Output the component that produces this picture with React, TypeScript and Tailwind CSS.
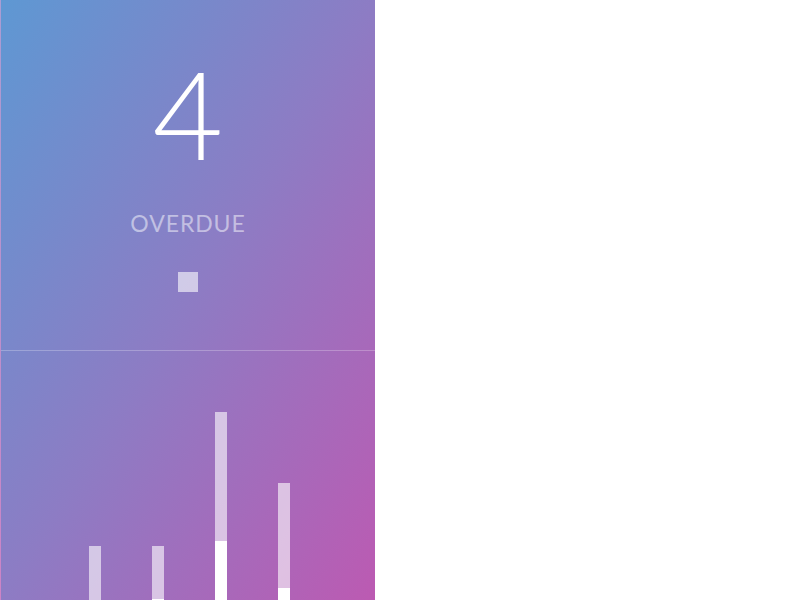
import React from "react";

const bars = [
    { total: 54, done: 0 },
    { total: 54, done: 1 },
    { total: 188, done: 59 },
    { total: 117, done: 12 },
];

export default function App() {
    return (
        <div className="w-[800px] h-[600px] bg-white flex overflow-hidden font-['Lato',sans-serif]">
            <div className="w-[375px] h-[600px] flex flex-col border-l border-white/25 bg-[linear-gradient(to_bottom_right,#5e98d3,#8d7cc4_50%,#bc5ab2)]">

                {/* Overdue count */}
                <section className="h-[351px] flex flex-col items-center border-b border-white/25">
                    <div className="mt-[52px] text-[122px] leading-[122px] font-light text-white">4</div>
                    <div className="mt-[38px] text-[23px] leading-none tracking-[0.04em] text-white/50">OVERDUE</div>
                    <div className="mt-[37px] w-5 h-5 bg-white/60" />
                </section>

                {/* Bar chart */}
                <section className="flex-1 flex items-end justify-center gap-[51px] pl-[3px]">
                    {bars.map((b, i) => (
                        <div key={i} className="w-3 flex flex-col bg-white/60" style={{ height: b.total }}>
                            <div className="flex-1" />
                            <div className="bg-white" style={{ height: b.done }} />
                        </div>
                    ))}
                </section>
            </div>
        </div>
    );
}
